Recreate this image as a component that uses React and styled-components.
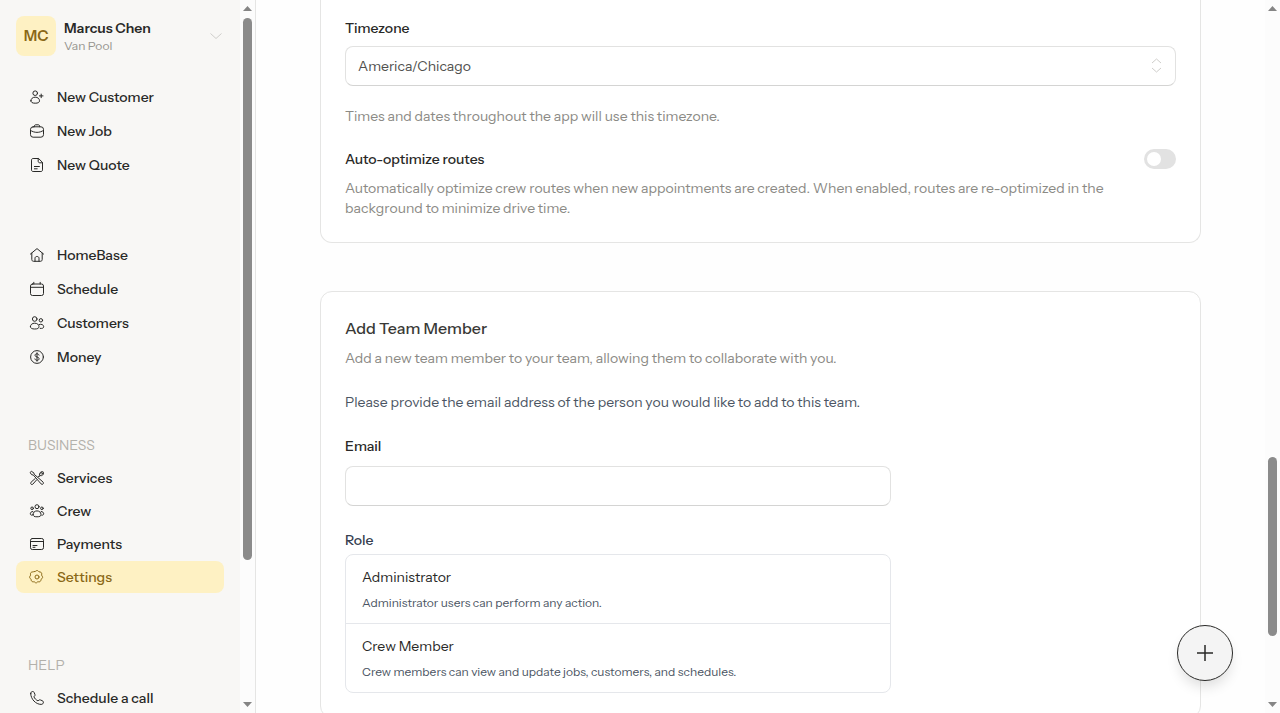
import React, { useState } from 'react';
import styled, { createGlobalStyle } from 'styled-components';

const GlobalStyle = createGlobalStyle`
  * {
    box-sizing: border-box;
  }
  body {
    margin: 0;
    background: #fefefe;
    color: #292927;
    font-family: 'Instrument Sans', Inter, 'Liberation Sans', sans-serif;
    font-size: 14px;
    line-height: 20px;
  }
  button, input, select {
    font: inherit;
    color: inherit;
  }
  h2, p {
    margin: 0;
  }
`;

const Page = styled.div`
  display: flex;
  height: 100vh;
  overflow: hidden;
`;

const Sidebar = styled.aside`
  display: flex;
  flex: 0 0 256px;
  background: #f8f7f5;
  border-right: 1px solid #e5e5e4;
`;

const SidebarBody = styled.div`
  flex: 1;
  min-width: 0;
  padding: 16px;
  overflow: hidden;
`;

const Account = styled.button`
  display: flex;
  align-items: center;
  gap: 8px;
  width: 100%;
  margin-bottom: 25px;
  padding: 0;
  border: 0;
  background: none;
  text-align: left;
  cursor: pointer;
`;

const Avatar = styled.span`
  display: grid;
  place-items: center;
  width: 40px;
  height: 40px;
  border-radius: 8px;
  background: #fef1c3;
  color: #8a6816;
  font-size: 15px;
  font-weight: 600;
`;

const AccountText = styled.span`
  display: flex;
  flex: 1;
  flex-direction: column;
  font-weight: 600;
`;

const AccountNote = styled.span`
  color: #96948e;
  font-size: 12px;
  font-weight: 400;
  line-height: 16px;
`;

const ChevronIcon = styled.svg`
  width: 16px;
  height: 16px;
  fill: none;
  stroke: #cfcecb;
`;

const Nav = styled.nav`
  display: flex;
  flex-direction: column;
  gap: 58px;
`;

const NavGroup = styled.div`
  display: flex;
  flex-direction: column;
  gap: ${(props) => (props.$dense ? '1px' : '2px')};
`;

const NavHeading = styled.div`
  padding: 4px 12px 6px;
  color: #b3b1ab;
`;

const NavLink = styled.a`
  display: flex;
  align-items: center;
  gap: 11px;
  height: 32px;
  padding: 0 12px;
  border-radius: 8px;
  background: ${(props) => (props.$active ? '#fef1c3' : 'transparent')};
  color: ${(props) => (props.$active ? '#8a6816' : '#292927')};
  font-weight: 500;
  text-decoration: none;
  white-space: nowrap;
`;

const NavIcon = styled.svg`
  flex: none;
  width: 18px;
  height: 18px;
  fill: none;
  stroke: currentColor;
  stroke-linecap: round;
  stroke-linejoin: round;
`;

const Main = styled.main`
  display: flex;
  flex: 1;
  flex-direction: column;
  gap: 48px;
  min-width: 0;
  padding: 0 64px;
  overflow: hidden;
`;

const Card = styled.section`
  flex: none;
  padding: 24px;
  border: 1px solid #e5e5e4;
  border-radius: 12px;
  background: #fff;
`;

const PreferencesCard = styled(Card)`
  padding-top: 18px;
  border-top: 0;
  border-top-left-radius: 0;
  border-top-right-radius: 0;
`;

const Label = styled.label`
  display: block;
  color: ${(props) => props.$color || '#292927'};
  font-weight: 500;
`;

const Muted = styled.p`
  color: #8b8a85;
`;

const SelectWrap = styled.div`
  position: relative;
  margin: 8px 0 20px;
`;

const Select = styled.select`
  display: block;
  width: 100%;
  height: 40px;
  padding: 0 36px 0 12px;
  border: 1px solid #e2e2e1;
  border-bottom-color: #d4d4d3;
  border-radius: 8px;
  background: #fff;
  color: #50504d;
  appearance: none;
`;

const SelectIcon = styled.svg`
  position: absolute;
  top: 10px;
  right: 10px;
  width: 20px;
  height: 20px;
  fill: none;
  stroke: #cfcecb;
  pointer-events: none;
`;

const SwitchRow = styled.div`
  display: flex;
  align-items: center;
  justify-content: space-between;
  margin: 23px 0 9px;
`;

const Switch = styled.input`
  width: 32px;
  height: 20px;
  margin: 0;
  padding: 3px;
  border-radius: 10px;
  background: ${(props) => (props.checked ? '#8a6816' : '#e2e2e2')};
  appearance: none;
  cursor: pointer;

  &::before {
    display: block;
    width: 14px;
    height: 14px;
    margin-left: ${(props) => (props.checked ? '12px' : '0')};
    border-radius: 50%;
    background: #fff;
    content: '';
  }
`;

const Title = styled.h2`
  margin-bottom: 8px;
  color: #393936;
  font-size: 16px;
  font-weight: 500;
  line-height: 24px;
`;

const Form = styled.form`
  display: grid;
  grid-template-columns: repeat(6, 1fr);
  column-gap: 24px;
  row-gap: 24px;
  margin-top: 24px;
`;

const Intro = styled.p`
  grid-column: 1 / -1;
  color: #4b5563;
`;

const Field = styled.div`
  display: flex;
  flex-direction: column;
  grid-column: span 4;
  gap: ${(props) => props.$gap};
`;

const TextInput = styled.input`
  width: 100%;
  height: 40px;
  padding: 0 12px;
  border: 1px solid #e2e2e1;
  border-bottom-color: #d4d4d3;
  border-radius: 8px;
  background: #fff;
`;

const RoleList = styled.div`
  border: 1px solid #e5e7eb;
  border-radius: 8px;
`;

const RoleOption = styled.button`
  display: flex;
  flex-direction: column;
  gap: 8px;
  width: 100%;
  padding: 12px 16px;
  border: 0;
  background: none;
  text-align: left;
  cursor: pointer;

  & + & {
    border-top: 1px solid #e5e7eb;
  }
`;

const RoleNote = styled.span`
  color: #4b5563;
  font-size: 12px;
  line-height: 16px;
`;

const AddButton = styled.button`
  position: fixed;
  right: 47px;
  bottom: 32px;
  display: grid;
  place-items: center;
  width: 56px;
  height: 56px;
  padding: 0;
  border: 1px solid #292927;
  border-radius: 50%;
  background: #f4f4f4;
  box-shadow: 0 8px 14px -3px rgba(0, 0, 0, 0.14);
  cursor: pointer;
`;

const Track = styled.div`
  display: flex;
  flex: 0 0 15px;
  flex-direction: column;
  align-items: center;
  padding: 6px 0;
  background: #fcfcfc;
`;

const Arrow = styled.svg`
  flex: none;
  width: 9px;
  height: 5px;
  fill: #858585;
`;

const Rail = styled.div`
  display: flex;
  flex: 1;
  flex-direction: column;
  width: 9px;
  margin: 7px 0;
`;

const Space = styled.div`
  flex: ${(props) => props.$size} 0 0;
`;

const Thumb = styled.div`
  flex: ${(props) => props.$size} 0 0;
  border-radius: 5px;
  background: #8b8b8b;
`;

const icons = {
  customer: (
    <>
      <circle cx="7.2" cy="5.2" r="2.3" />
      <path d="M2.9 12.8c0-2.2 1.8-3.6 4.3-3.6s4.3 1.4 4.3 3.6c0 1.7-1.5 2.4-4.3 2.4s-4.3-.7-4.3-2.4zM13.2 6.1v3.6M11.4 7.9H15" />
    </>
  ),
  job: (
    <>
      <rect x="2.5" y="4.8" width="13" height="10.4" rx="2.6" />
      <path d="M6.2 4.8c0-1.4.6-2 1.7-2h2.2c1.1 0 1.7.6 1.7 2M2.5 8.4c4 2.7 9 2.7 13 0" />
    </>
  ),
  quote: (
    <path d="M10.2 2.5H5.1c-1 0-1.6.6-1.6 1.6v9.8c0 1 .6 1.6 1.6 1.6h7.8c1 0 1.6-.6 1.6-1.6V6.8zM10.2 2.5v2.7c0 1 .6 1.6 1.6 1.6h2.7M6.4 10.5h5M6.4 12.8h2.8" />
  ),
  home: (
    <path d="M2.4 8.1 9 2.6l6.6 5.5M3.8 7.2v6.2c0 1.2.6 1.9 1.8 1.9h6.8c1.2 0 1.8-.7 1.8-1.9V7.2M7 15.2v-3c0-2.3 4-2.3 4 0v3" />
  ),
  schedule: (
    <>
      <rect x="2.5" y="4" width="13" height="11.5" rx="2" />
      <path d="M2.5 7.3h13M5.8 2.3V4M12.2 2.3V4" />
    </>
  ),
  customers: (
    <>
      <circle cx="6.7" cy="5" r="2.3" />
      <circle cx="12.9" cy="6.3" r="1.7" />
      <path d="M2.4 12.6c0-2 1.8-3.4 4.3-3.4s4.3 1.4 4.3 3.4c0 1.7-1.5 2.4-4.3 2.4s-4.3-.7-4.3-2.4zM11.2 10.5c2.2-.9 4.5.4 4.5 2.2 0 1.4-1.2 1.9-3.5 1.7" />
    </>
  ),
  money: (
    <>
      <circle cx="9" cy="9" r="6.4" />
      <path d="M11 7.1C10.7 6.2 10 5.8 9 5.8c-1.2 0-2 .6-2 1.5C7 9.5 11.1 8.500 11.1 10.700c0 1-.8 1.600-2.100 1.600-1.100 0-1.900-.5-2.100-1.400M9 4.800v8.400" />
    </>
  ),
  services: (
    <>
      <path d="m10.300 7.600 1.300-1.300c-.5-1.900.9-3.900 3.100-3.700L12.900 4.400l.8.800 1.800-1.800c.4 2.300-1.500 3.700-3.400 3.200l-1.300 1.300M7.200 9.500l-4.100 3.700c-1.300 1.300.5 3.300 1.800 1.900l3.700-4.200" />
      <path d="m2.400 3.200.9-.9 2.500 1.500.4 1.500 8.800 7.700c1.300 1.300-.5 3.300-1.900 1.900L5.400 6.100 3.900 5.700z" />
    </>
  ),
  crew: (
    <>
      <circle cx="9" cy="4.700" r="2" />
      <circle cx="4.100" cy="6.300" r="1.300" />
      <circle cx="13.900" cy="6.300" r="1.300" />
      <path d="M5 12.600c0-2.300 1.700-3.700 4-3.700s4 1.400 4 3.700c0 1.600-1.400 2.200-4 2.200s-4-.6-4-2.200zM4.800 9.500c-1.500.1-2.500 1-2.500 2.300 0 .9.700 1.400 1.800 1.500M13.200 9.500c1.500.1 2.500 1 2.500 2.300 0 .9-.7 1.400-1.800 1.500" />
    </>
  ),
  payments: (
    <>
      <rect x="2.500" y="3.500" width="13" height="11" rx="1.800" />
      <path d="M2.500 6.500h13M5 10.500h4M5 12.300h2" />
    </>
  ),
  settings: (
    <>
      <path d="M7.700 3.100c.8-.8 1.800-.8 2.600 0l.7.700 1 .2c1.300.2 1.900 1 1.700 2.200l-.1 1 .6.900c.7 1 .5 1.900-.4 2.600l-.7.600-.2 1c-.3 1.200-1.100 1.700-2.300 1.500h-.9l-.8.700c-.5.5-1.200.5-1.700 0l-.9-.7h-.9c-1.200.1-2-.5-2.200-1.600l-.2-.9-.6-.7c-.9-.8-1-1.700-.3-2.600l.5-.8-.1-1c-.2-1.200.5-2 1.700-2.200l1-.2z" />
      <circle cx="9" cy="9" r="2" />
    </>
  ),
  phone: (
    <path d="M2.700 4.500c0-1.300.9-2 2-2 .8 0 1.100.3 1.500 1.200l.7 1.600c.3.700.2 1.200-.3 1.700l-.7.800c.8 1.800 2.100 3.100 4.100 4.100l.9-.7c.5-.5 1-.5 1.700-.2l1.600.7c.9.400 1.200.8 1.200 1.500 0 1.300-.9 2.200-2.200 2.200-5.400 0-10.500-5.300-10.500-10.900z" />
  ),
};

const groups = [
  {
    items: [
      ['customer', 'New Customer'],
      ['job', 'New Job'],
      ['quote', 'New Quote'],
    ],
  },
  {
    items: [
      ['home', 'HomeBase'],
      ['schedule', 'Schedule'],
      ['customers', 'Customers'],
      ['money', 'Money'],
    ],
  },
  {
    heading: 'BUSINESS',
    items: [
      ['services', 'Services'],
      ['crew', 'Crew'],
      ['payments', 'Payments'],
      ['settings', 'Settings'],
    ],
  },
  {
    heading: 'HELP',
    items: [['phone', 'Schedule a call']],
  },
];

const roles = [
  ['Administrator', 'Administrator users can perform any action.'],
  ['Crew Member', 'Crew members can view and update jobs, customers, and schedules.'],
];

const Scrollbar = ({ before, size, after }) => (
  <Track aria-hidden="true">
    <Arrow viewBox="0 0 9 5">
      <path d="M0 5 4.500 0 9 5z" />
    </Arrow>
    <Rail>
      <Space $size={before} />
      <Thumb $size={size} />
      <Space $size={after} />
    </Rail>
    <Arrow viewBox="0 0 9 5">
      <path d="M0 0 4.500 5 9 0z" />
    </Arrow>
  </Track>
);

const App = () => {
  const [optimize, setOptimize] = useState(false);
  const [email, setEmail] = useState('');
  const [role, setRole] = useState(null);

  return (
    <>
      <GlobalStyle />
      <Page>
        <Sidebar>
          <SidebarBody>
            <Account type="button">
              <Avatar>MC</Avatar>
              <AccountText>
                Marcus Chen
                <AccountNote>Van Pool</AccountNote>
              </AccountText>
              <ChevronIcon viewBox="0 0 16 16">
                <path d="m2.500 5.500 5.500 5 5.500-5" />
              </ChevronIcon>
            </Account>
            <Nav>
              {groups.map(({ heading, items }) => (
                <NavGroup key={items[0][0]} $dense={Boolean(heading)}>
                  {heading && <NavHeading>{heading}</NavHeading>}
                  {items.map(([icon, text]) => (
                    <NavLink key={icon} href="#" $active={icon === 'settings'}>
                      <NavIcon viewBox="0 0 18 18">{icons[icon]}</NavIcon>
                      {text}
                    </NavLink>
                  ))}
                </NavGroup>
              ))}
            </Nav>
          </SidebarBody>
          <Scrollbar before={0} size={543} after={135} />
        </Sidebar>
        <Main>
          <PreferencesCard>
            <Label htmlFor="timezone">Timezone</Label>
            <SelectWrap>
              <Select id="timezone" defaultValue="America/Chicago">
                <option>America/Chicago</option>
              </Select>
              <SelectIcon viewBox="0 0 20 20">
                <path d="m6 7 4.500-4L15 7M6 12l4.500 4 4.500-4" />
              </SelectIcon>
            </SelectWrap>
            <Muted>Times and dates throughout the app will use this timezone.</Muted>
            <SwitchRow>
              <Label htmlFor="optimize">Auto-optimize routes</Label>
              <Switch
                id="optimize"
                type="checkbox"
                role="switch"
                checked={optimize}
                onChange={(e) => setOptimize(e.target.checked)}
              />
            </SwitchRow>
            <Muted>
              Automatically optimize crew routes when new appointments are created. When enabled,
              routes are re-optimized in the background to minimize drive time.
            </Muted>
          </PreferencesCard>
          <Card>
            <Title>Add Team Member</Title>
            <Muted>
              Add a new team member to your team, allowing them to collaborate with you.
            </Muted>
            <Form onSubmit={(e) => e.preventDefault()}>
              <Intro>
                Please provide the email address of the person you would like to add to this team.
              </Intro>
              <Field $gap="10px">
                <Label htmlFor="email">Email</Label>
                <TextInput
                  id="email"
                  type="email"
                  value={email}
                  onChange={(e) => setEmail(e.target.value)}
                />
              </Field>
              <Field $gap="4px">
                <Label as="span" id="role-label" $color="#374151">
                  Role
                </Label>
                <RoleList role="group" aria-labelledby="role-label">
                  {roles.map(([name, note]) => (
                    <RoleOption
                      key={name}
                      type="button"
                      aria-pressed={role === name}
                      onClick={() => setRole(name)}
                    >
                      {name}
                      <RoleNote>{note}</RoleNote>
                    </RoleOption>
                  ))}
                </RoleList>
              </Field>
            </Form>
          </Card>
        </Main>
        <Scrollbar before={440} size={179} after={59} />
      </Page>
      <AddButton type="button" aria-label="Add">
        <svg width="16" height="16" viewBox="0 0 16 16" stroke="currentColor" strokeWidth="1.500">
          <path d="M8 0v16M0 8h16" />
        </svg>
      </AddButton>
    </>
  );
};

export default App;
